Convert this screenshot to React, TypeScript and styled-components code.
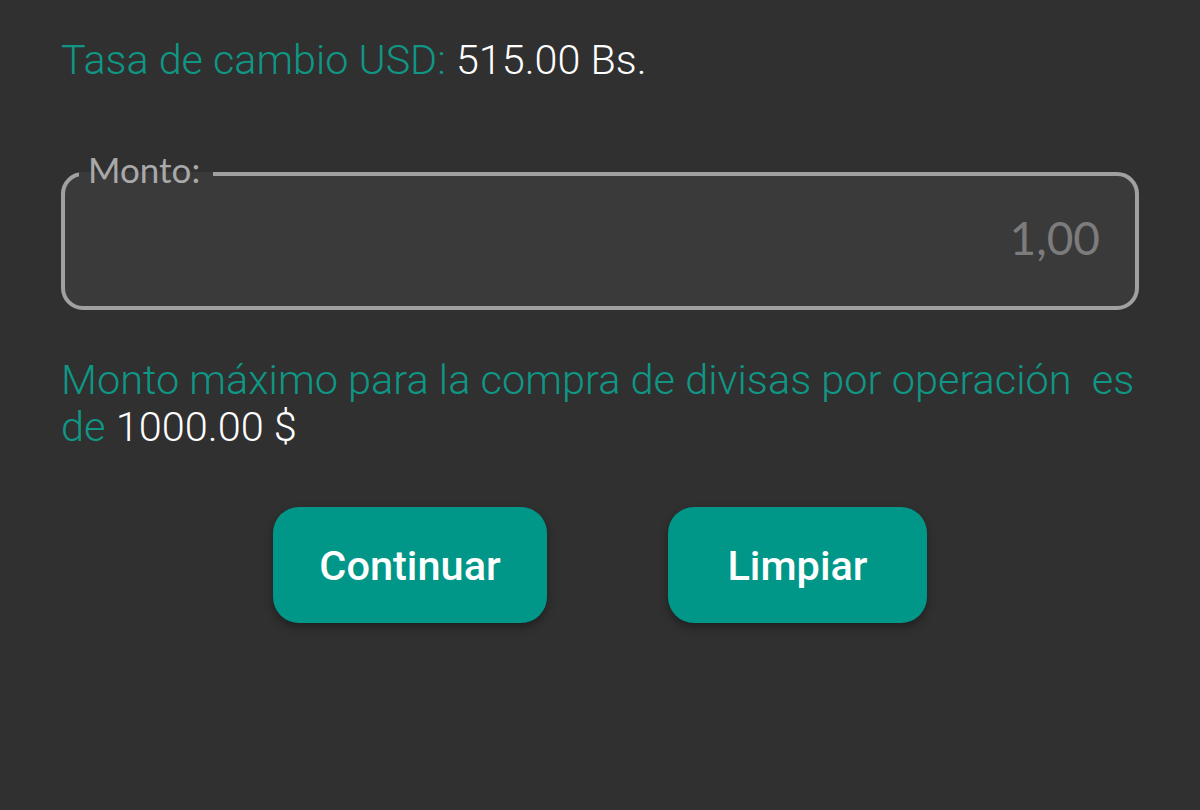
import styled, { createGlobalStyle } from "styled-components"

const GlobalStyle = createGlobalStyle`
  html, body {
    margin: 0;
    background: #303030;
  }
  body {
    font-family: Roboto, "Liberation Sans", sans-serif;
  }
`

const App = () => {
  return (
    <>
      <GlobalStyle />
      <Page>
        <Rate>
          Tasa de cambio USD: <Value>515.00 Bs.</Value>
        </Rate>
        <Field>
          <Label>Monto:</Label>
          <AmountInput type="text" placeholder="1,00" />
        </Field>
        <Notice>
          Monto máximo para la compra de divisas por operación{"\u00a0 "}es de <Value>1000.00 $</Value>
        </Notice>
        <Actions>
          <ActionButton type="button" $width={274}>Continuar</ActionButton>
          <ActionButton type="button" $width={259}>Limpiar</ActionButton>
        </Actions>
      </Page>
    </>
  )
}

const Page = styled.main`
  display: flex;
  flex-direction: column;
  padding: 35px 61px 0;
  min-height: 810px;
  box-sizing: border-box;
`

const Rate = styled.p`
  margin: 0;
  font-size: 41.3px;
  font-weight: 300;
  line-height: 50px;
  color: #0f9685;
`

const Value = styled.span`
  color: #ffffff;
`

const Field = styled.fieldset`
  margin: 67px 0 0;
  padding: 14px 35px 40px 14px;
  border: 4px solid #a0a0a0;
  border-radius: 22px;
  background: #3a3a3a;
  min-width: 0;
`

const Label = styled.legend`
  margin-left: 0;
  padding: 0 13px 10px 9px;
  font-family: Lato, "Open Sans", sans-serif;
  font-size: 35px;
  line-height: 34px;
  color: #a9a9a9;
`

const AmountInput = styled.input`
  display: block;
  width: 100%;
  box-sizing: border-box;
  padding: 0;
  border: none;
  outline: none;
  background: transparent;
  text-align: right;
  font-family: Lato, "Open Sans", sans-serif;
  font-size: 46px;
  line-height: 56px;
  height: 56px;
  color: #dddddd;
  &::placeholder {
    color: #7c7c7c;
  }
`

const Notice = styled.p`
  margin: 46px 0 0;
  font-size: 41.5px;
  font-weight: 300;
  line-height: 47px;
  color: #0f9685;
`

const Actions = styled.div`
  display: flex;
  justify-content: center;
  gap: 121px;
  margin-top: 57px;
`

const ActionButton = styled.button<{ $width: number }>`
  width: ${(p) => p.$width}px;
  height: 116px;
  border: none;
  border-radius: 26px;
  background: #009688;
  color: #ffffff;
  font-family: Roboto, "Liberation Sans", sans-serif;
  font-size: 41.5px;
  font-weight: 500;
  box-shadow: 0 4px 8px rgba(0, 0, 0, 0.35);
  cursor: pointer;
`

export default App
